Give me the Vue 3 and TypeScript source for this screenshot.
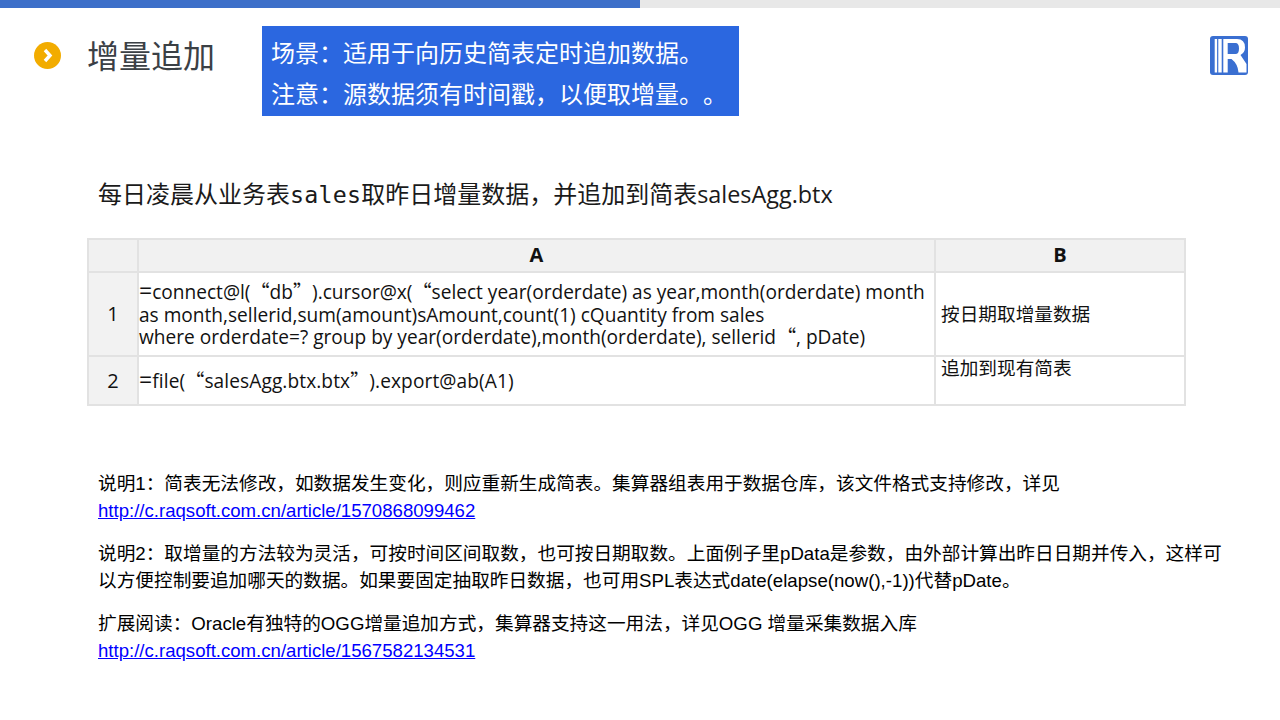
<script setup lang="ts">
interface Seg { t: string; cls: string }
const split = (line: string): Seg[] =>
  line
    .split(/([“”]|^=)/)
    .filter(Boolean)
    .map((t) => {
      if (t === '=') return { t, cls: 'eq' }
      if (t === '“' && line.includes('pDate')) return { t, cls: 'q tail' }
      if (t === '“' || t === '”') return { t, cls: 'q' }
      return { t, cls: '' }
    })

const rows = [
  {
    n: '1',
    a: ['=connect@l(“db”).cursor@x(“select year(orderdate) as year,month(orderdate) month', 'as month,sellerid,sum(amount)sAmount,count(1) cQuantity from sales', 'where orderdate=? group by year(orderdate),month(orderdate), sellerid “, pDate)'].map(split),
    b: '按日期取增量数据',
  },
  { n: '2', a: ['=file(“salesAgg.btx.btx”).export@ab(A1)'].map(split), b: '追加到现有简表' },
]
</script>

<template>
  <div class="slide">
    <div class="progress"><div class="progress-fill"></div></div>
    <header class="head">
      <span class="bullet">
        <svg width="27" height="27" viewBox="0 0 27 27">
          <circle cx="13.500" cy="13.500" r="13.500" fill="#f2ac00" />
          <path d="M11 8 L16 13.500 L11 19" fill="none" stroke="#fff" stroke-width="3.4" />
        </svg>
      </span>
      <h1 class="title">增量追加</h1>
      <div class="note">
        <div>场景：适用于向历史简表定时追加数据。</div>
        <div>注意：源数据须有时间戳，以便取增量。。</div>
      </div>
      <svg class="logo" width="38" height="39" viewBox="0 0 38 39">
        <rect width="38" height="39" rx="3" fill="#3a6fd1" />
        <rect x="4.700" y="3" width="2.400" height="33.500" fill="#fff" />
        <rect x="8.300" y="3" width="3.400" height="33.500" fill="#fff" />
        <path fill-rule="evenodd" d="M13.300 3 H27 Q35 3 35 11.500 Q35 16.500 30.500 19 L36.500 28 V36.500 H28.500 Q28 28 21.500 23 H17.700 V36.500 H13.300 Z M17.700 7 V18 H25.500 Q29 18 29 12.500 Q29 7 25.500 7 Z" fill="#fff" />
      </svg>
    </header>

    <p class="subtitle">每日凌晨从业务表<span class="mono">sales</span>取昨日增量数据，并追加到简表<span class="latin">salesAgg.btx</span></p>

    <div class="grid">
      <div class="cell hd"></div>
      <div class="cell hd">A</div>
      <div class="cell hd">B</div>
      <template v-for="r in rows" :key="r.n">
        <div class="cell idx">{{ r.n }}</div>
        <div class="cell code" :class="{ single: r.n === '2' }">
          <div v-for="(l, i) in r.a" :key="i"><span v-for="(s, j) in l" :key="j" :class="s.cls">{{ s.t }}</span></div>
        </div>
        <div class="cell remark" :class="{ top: r.n === '2' }">{{ r.b }}</div>
      </template>
    </div>

    <section class="notes">
      <p>说明1：简表无法修改，如数据发生变化，则应重新生成简表。集算器组表用于数据仓库，该文件格式支持修改，详见<br /><a href="#">http://c.raqsoft.com.cn/article/1570868099462</a></p>
      <p>说明2：取增量的方法较为灵活，可按时间区间取数，也可按日期取数。上面例子里pData是参数，由外部计算出昨日日期并传入，这样可以方便控制要追加哪天的数据。如果要固定抽取昨日数据，也可用SPL表达式date(elapse(now(),-1))代替pDate。</p>
      <p>扩展阅读：Oracle有独特的OGG增量追加方式，集算器支持这一用法，详见OGG 增量采集数据入库<br /><a href="#">http://c.raqsoft.com.cn/article/1567582134531</a></p>
    </section>
  </div>
</template>

<style>
html, body { margin: 0; background: #fff; }
</style>

<style scoped>
.slide {
  width: 1280px;
  height: 720px;
  overflow: hidden;
  background: #fff;
  font-family: "Liberation Sans", "Noto Sans CJK SC", sans-serif;
  color: #000;
  text-spacing-trim: space-all;
}
.progress { height: 8px; background: #e8e8e8; }
.progress-fill { width: 640px; height: 100%; background: #3d6fc9; }
.head {
  display: flex;
  align-items: flex-start;
  height: 90px;
  padding: 18px 32px 0 34px;
}
.bullet { display: flex; width: 27px; height: 27px; margin-top: 16px; }
.title {
  margin: 7px 0 0 26px;
  width: 128px;
  font-size: 32px;
  line-height: 48px;
  font-weight: 400;
  color: #3b4045;
}
.note {
  margin-left: 47px;
  width: 477px;
  height: 90px;
  box-sizing: border-box;
  padding: 7px 0 0 9px;
  background: #2b67e0;
  color: #fff;
  font-size: 24px;
  line-height: 41px;
}
.logo { margin: 10px 0 0 auto; }
.subtitle {
  margin: 54px 0 0 98px;
  height: 48px;
  font-size: 24px;
  line-height: 48px;
  font-family: "Open Sans", "Noto Sans CJK SC", sans-serif;
  color: #1a1a1a;
}
.mono { font-family: "DejaVu Sans Mono", monospace; font-size: 23.300px; letter-spacing: 0.200px; }
.latin { font-size: 23.400px; }
.grid {
  display: grid;
  grid-template-columns: 50px 797px 250px;
  grid-template-rows: 33px 84px 49px;
  width: 1097px;
  margin: 20px 0 0 87px;
  font-family: "Open Sans", "Noto Sans CJK SC", sans-serif;
  font-size: 18.670px;
  line-height: 22.500px;
  color: #111;
  border: solid #e2e2e2;
  border-width: 2px 0 0 2px;
}
.cell {
  box-sizing: border-box;
  border: solid #e2e2e2;
  border-width: 0 2px 2px 0;
  display: flex;
  align-items: center;
  white-space: nowrap;
}
.hd {
  justify-content: center;
  background: #f1f1f1;
  font-weight: 700;
  font-size: 20px;
}
.idx { justify-content: center; background: #f2f2f2; font-size: 20px; line-height: 20px; }
.code { display: block; padding: 8px 0 0 0; font-size: 19.100px; }
.code.single { padding-top: 13px; letter-spacing: 0.100px; }
.q { font-family: "Noto Sans CJK SC", sans-serif; line-height: 0; }
.tail { margin-left: -4px; }
.eq { font-size: 23px; line-height: 0; }
.remark { padding-left: 5px; }
.remark.top { align-items: flex-start; }
.notes {
  margin: 64px 0 0 98px;
  width: 1130px;
  font-size: 18.670px;
  line-height: 27px;
}
.notes p { margin: 0 0 16px; }
.notes a { color: #0000ff; text-decoration: underline; font-size: 18.600px; }
</style>
